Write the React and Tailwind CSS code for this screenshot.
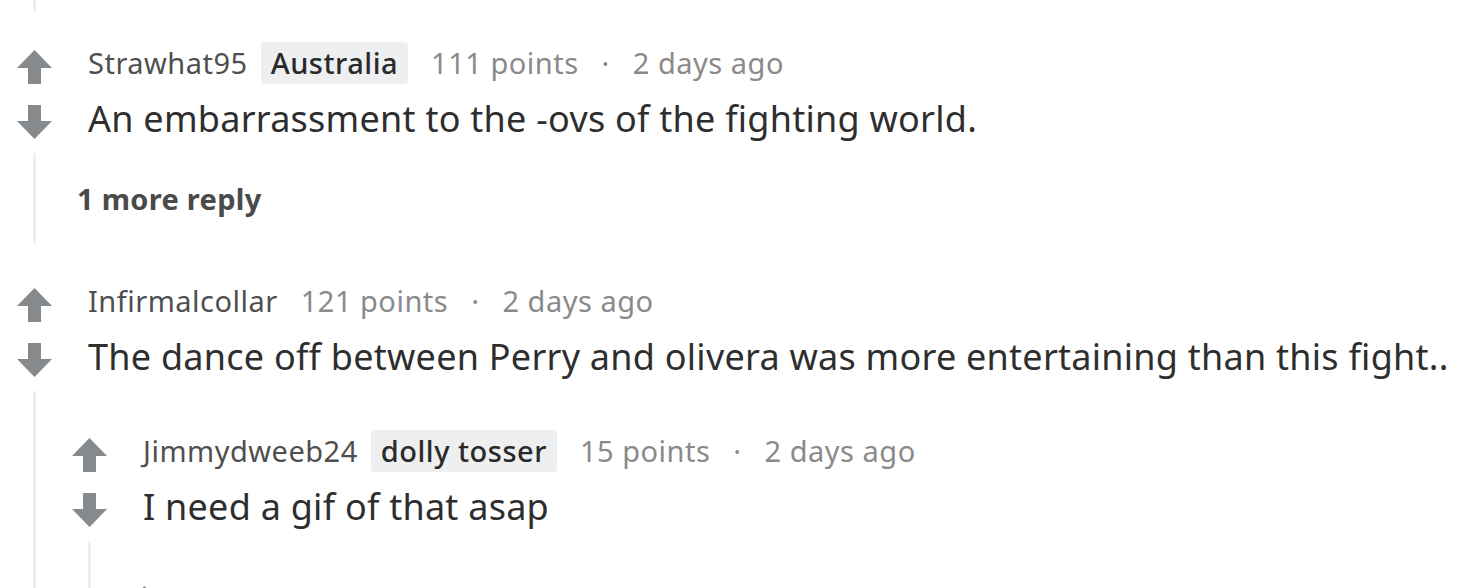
import React from "react";

const FONT = { fontFamily: '"Noto Sans", "Open Sans", sans-serif' };

function Up() {
  return (
    <svg width="35" height="34" viewBox="0 0 35 34" className="block">
      <polygon points="17.5,0 35,18 24,18 24,34 11,34 11,18 0,18" fill="#878a8c" />
    </svg>
  );
}
function Down() {
  return (
    <svg width="35" height="34" viewBox="0 0 35 34" className="block">
      <polygon points="11,0 24,0 24,16 35,16 17.5,34 0,16 11,16" fill="#878a8c" />
    </svg>
  );
}

function Thread({ children, pt = "pt-[38px]" }) {
  return (
    <div className="flex mt-[10px]">
      <div className="w-[55px] shrink-0 flex">
        <div className="ml-[33px] w-[3px] bg-[#edeff1]" />
      </div>
      <div className={`flex flex-col ${pt}`}>{children}</div>
    </div>
  );
}

function Comment({ user, flair, points, body, children }) {
  return (
    <div className="flex flex-col">
      <div className="flex">
        <div className="w-[69px] shrink-0 flex flex-col items-center pt-[8px] gap-[21px]">
          <Up />
          <Down />
        </div>
        <div className="ml-[19px] flex flex-col">
          <div className="h-[42px] flex items-center text-[29px] tracking-[0.5px] whitespace-nowrap">
            <span className="text-[#4f4f4f]">{user}</span>
            {flair && (
              <span className="ml-[13px] h-[42px] px-[10px] flex items-center bg-[#edeff1] rounded-[4px] text-[#2a2a2a] font-medium">
                {flair}
              </span>
            )}
            <span className="ml-[23px] text-[#8a8a8a]">{points}</span>
            <span className="ml-[23px] text-[#8a8a8a]">·</span>
            <span className="ml-[23px] text-[#8a8a8a]">2 days ago</span>
          </div>
          <div className="mt-[11px] h-[48px] leading-[48px] text-[36px] tracking-[0.25px] text-[#2e2e2e] whitespace-nowrap">
            {body}
          </div>
        </div>
      </div>
      {children}
    </div>
  );
}

export default function App() {
  return (
    <div className="w-[1460px] h-[588px] overflow-hidden bg-white" style={FONT}>
      <div className="ml-[33px] w-[3px] h-[12px] bg-[#edeff1]" />
      <div className="h-[30px]" />
      <Comment
        user="Strawhat95"
        flair="Australia"
        points="111 points"
        body="An embarrassment to the -ovs of the fighting world."
      >
        <div className="flex mt-[10px]">
          <div className="w-[55px] shrink-0 flex">
            <div className="ml-[33px] w-[3px] bg-[#edeff1]" />
          </div>
          <div className="pt-[31px] pb-[29px] pl-[22px]">
            <div className="h-[30px] leading-[30px] text-[29px] tracking-[0.3px] font-bold text-[#4a4a4a] whitespace-nowrap">
              1 more reply
            </div>
          </div>
        </div>
      </Comment>
      <div className="h-[37px]" />
      <Comment
        user="Infirmalcollar"
        points="121 points"
        body="The dance off between Perry and olivera was more entertaining than this fight.."
      >
        <Thread pt="pt-[39px]">
          <Comment
            user="Jimmydweeb24"
            flair="dolly tosser"
            points="15 points"
            body="I need a gif of that asap"
          >
            <Thread pt="pt-[37px]">
              <Comment user="lilbitofheaven" points="9 points" body="Same here honestly" />
            </Thread>
          </Comment>
        </Thread>
      </Comment>
    </div>
  );
}
